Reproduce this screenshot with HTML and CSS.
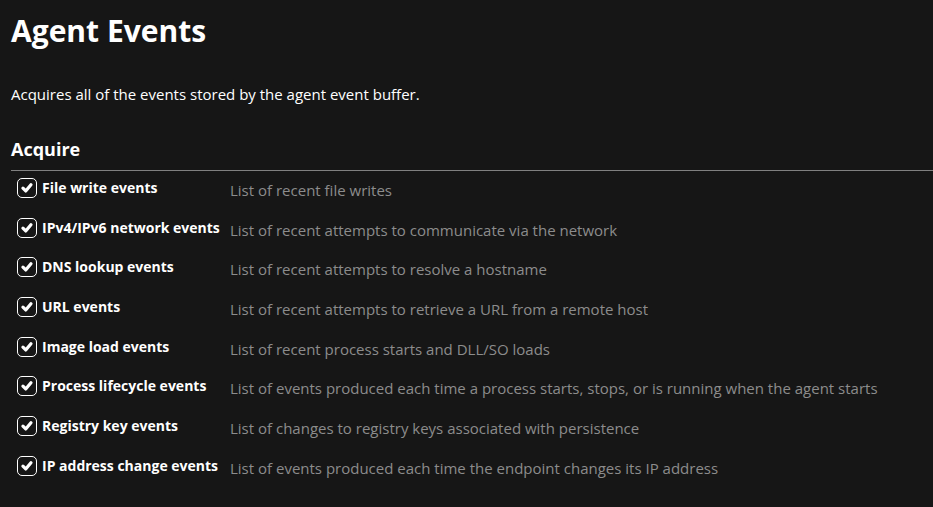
FILE: index.html
```html
<!DOCTYPE html>
<html lang="en">
<head>
    <meta charset="UTF-8">
    <title>Agent Events</title>
    <link rel="stylesheet" href="styles.css">
</head>
<body>
    <div class="page">
        <h1 class="page__title">Agent Events</h1>
        <p class="page__intro">Acquires all of the events stored by the agent event buffer.</p>

        <h2 class="section__title">Acquire</h2>
        <div class="options">
            <div class="option">
                <label class="option__label"><span class="check"><svg viewBox="0 0 20 20"><path d="M5.5 10.2 L8.6 13.3 L14.4 6.4"/></svg></span>File write events</label>
                <span class="option__desc">List of recent file writes</span>
            </div>
            <div class="option">
                <label class="option__label"><span class="check"><svg viewBox="0 0 20 20"><path d="M5.5 10.2 L8.6 13.3 L14.4 6.4"/></svg></span>IPv4/IPv6 network events</label>
                <span class="option__desc">List of recent attempts to communicate via the network</span>
            </div>
            <div class="option">
                <label class="option__label"><span class="check"><svg viewBox="0 0 20 20"><path d="M5.5 10.2 L8.6 13.3 L14.4 6.4"/></svg></span>DNS lookup events</label>
                <span class="option__desc">List of recent attempts to resolve a hostname</span>
            </div>
            <div class="option">
                <label class="option__label"><span class="check"><svg viewBox="0 0 20 20"><path d="M5.5 10.2 L8.6 13.3 L14.4 6.4"/></svg></span>URL events</label>
                <span class="option__desc">List of recent attempts to retrieve a URL from a remote host</span>
            </div>
            <div class="option">
                <label class="option__label"><span class="check"><svg viewBox="0 0 20 20"><path d="M5.5 10.2 L8.6 13.3 L14.4 6.4"/></svg></span>Image load events</label>
                <span class="option__desc">List of recent process starts and DLL/SO loads</span>
            </div>
            <div class="option">
                <label class="option__label"><span class="check"><svg viewBox="0 0 20 20"><path d="M5.5 10.2 L8.6 13.3 L14.4 6.4"/></svg></span>Process lifecycle events</label>
                <span class="option__desc">List of events produced each time a process starts, stops, or is running when the agent starts</span>
            </div>
            <div class="option">
                <label class="option__label"><span class="check"><svg viewBox="0 0 20 20"><path d="M5.5 10.2 L8.6 13.3 L14.4 6.4"/></svg></span>Registry key events</label>
                <span class="option__desc">List of changes to registry keys associated with persistence</span>
            </div>
            <div class="option">
                <label class="option__label"><span class="check"><svg viewBox="0 0 20 20"><path d="M5.5 10.2 L8.6 13.3 L14.4 6.4"/></svg></span>IP address change events</label>
                <span class="option__desc">List of events produced each time the endpoint changes its IP address</span>
            </div>
        </div>
    </div>
</body>
</html>
```
FILE: styles.css
```css
* {
	box-sizing: border-box;
	margin: 0;
	padding: 0;
}

:root {
	--bg: #161616;
	--fg: #ffffff;
	--muted: #8c8c8c;
	--rule: #808080;
}

body {
	background-color: var(--bg);
	color: var(--fg);
	font-family: "Open Sans", "Liberation Sans", sans-serif;
	height: 100vh;
	overflow: hidden;
}

.page {
	padding: 8px 0 0 11px;
}

.page__title {
	font-size: 30px;
	font-weight: 700;
	line-height: 46px;
}

.page__intro {
	font-size: 15px;
	line-height: 20px;
	margin-top: 30px;
}

.section__title {
	font-size: 18px;
	font-weight: 700;
	line-height: 24px;
	margin-top: 33px;
	padding-bottom: 9px;
	border-bottom: 1px solid var(--rule);
}

.options {
	padding-left: 6px;
}

.option {
	display: grid;
	grid-template-columns: 213px 1fr;
	align-items: start;
	height: 39.7px;
	padding-top: 7px;
}

.option__label {
	display: flex;
	align-items: center;
	gap: 5px;
	font-size: 14px;
	font-weight: 700;
	line-height: 20px;
}

.check {
	display: block;
	width: 20px;
	height: 20px;
	border: 1.5px solid var(--fg);
	border-radius: 5px;
	flex-shrink: 0;

	svg {
		display: block;
		width: 100%;
		height: 100%;
		fill: none;
		stroke: var(--fg);
		stroke-width: 3.6px;
		stroke-linecap: round;
		stroke-linejoin: round;
	}
}

.option__desc {
	color: var(--muted);
	font-size: 15px;
	line-height: 20px;
	padding-top: 2px;
}
```
